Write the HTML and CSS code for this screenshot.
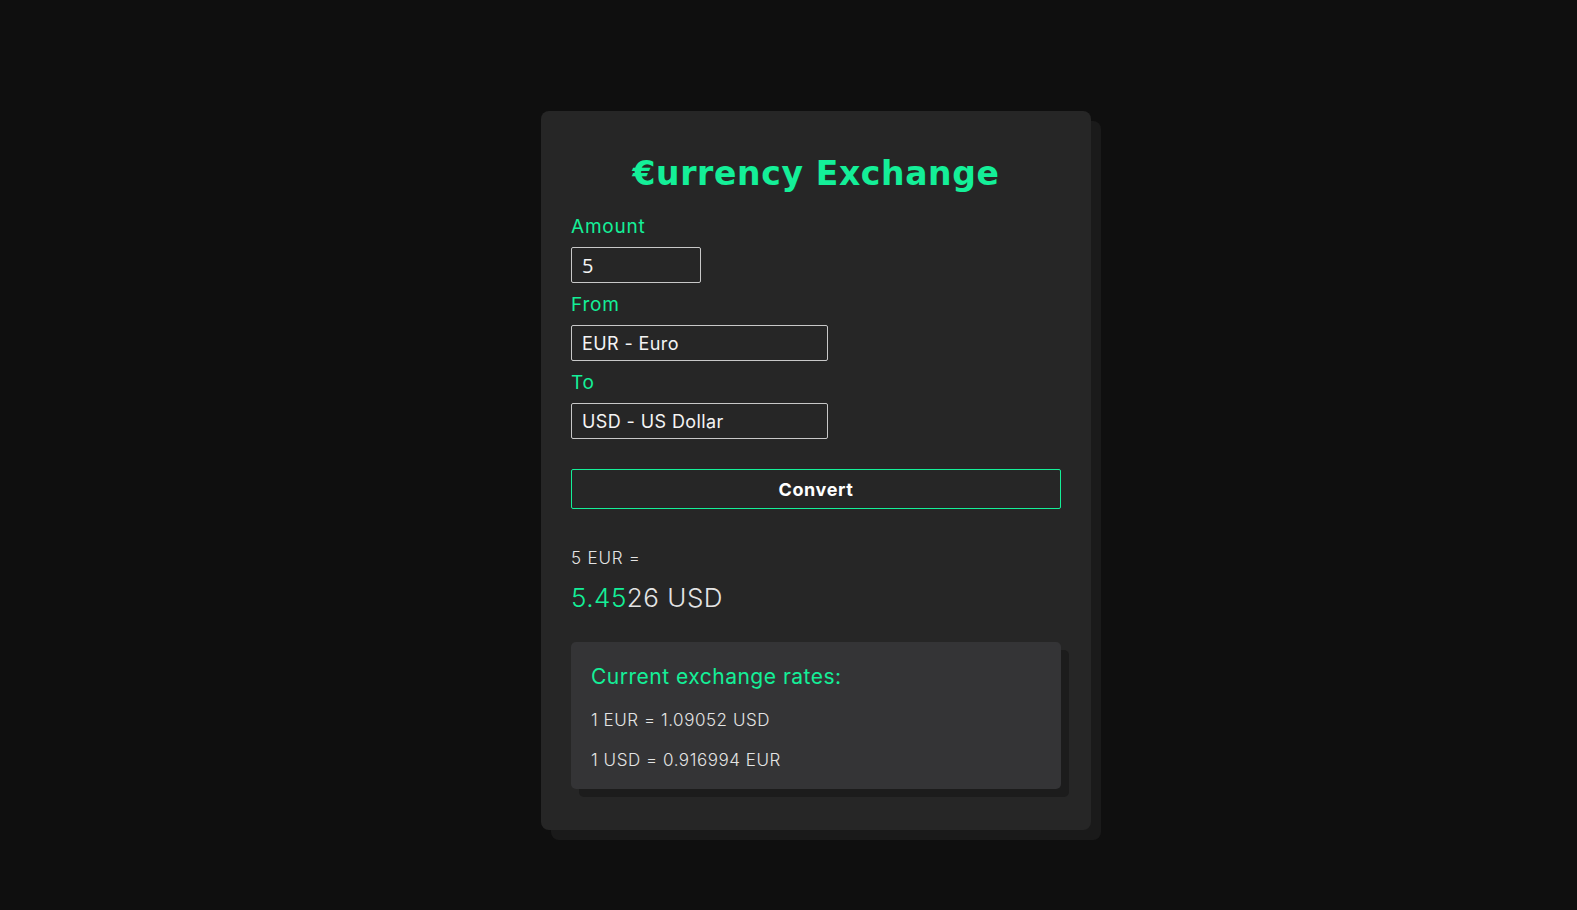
FILE: index.html
```html
<!DOCTYPE html>
<html lang="en">
<head>
<meta charset="utf-8">
<title>Currency Exchange</title>
<link rel="stylesheet" href="styles.css">
</head>
<body>
<main class="card">
  <h1 class="title">€urrency Exchange</h1>
  <form class="form">
    <label class="label" for="amount">Amount</label>
    <input class="input amount" id="amount" type="text" value="5">
    <label class="label" for="from">From</label>
    <select class="input select" id="from"><option>EUR - Euro</option></select>
    <label class="label" for="to">To</label>
    <select class="input select" id="to"><option>USD - US Dollar</option></select>
    <button class="btn" type="button">Convert</button>
  </form>
  <section class="result">
    <p class="result-from">5 EUR =</p>
    <p class="result-to"><span class="hl">5.45</span>26 USD</p>
  </section>
  <section class="rates">
    <h2 class="rates-title">Current exchange rates:</h2>
    <p class="rate">1 EUR = 1.09052 USD</p>
    <p class="rate">1 USD = 0.916994 EUR</p>
  </section>
</main>
</body>
</html>
```
FILE: styles.css
```css
* { box-sizing: border-box; }
html, body { margin: 0; padding: 0; }
body {
  background: #0f0f0f;
  font-family: Inter, "Noto Sans", sans-serif;
  color: #e4e4e4;
  display: flex;
  justify-content: center;
  padding-top: 111px;
  min-height: 910px;
}
.card {
  width: 550px;
  height: 719px;
  margin-left: 55px;
  background: #262626;
  border-radius: 8px;
  box-shadow: 10px 10px 0 #1a1a1a;
  padding: 43px 30px 30px;
}
.title {
  margin: 0 0 19px;
  text-align: center;
  font-family: "DejaVu Sans", Inter, sans-serif;
  font-size: 33px;
  line-height: 40px;
  font-weight: 700;
  color: #14ef98;
  letter-spacing: 0.65px;
}
.form { display: flex; flex-direction: column; align-items: flex-start; }
.label {
  color: #14ef98;
  font-size: 19px;
  line-height: 23px;
  font-weight: 400;
  letter-spacing: 0.8px;
  padding-top: 2px;
  margin-bottom: 9px;
}
.input {
  height: 36px;
  background: transparent;
  border: 1px solid #c8c8c8;
  border-radius: 2px;
  color: #f4f4f4;
  padding: 0 10px;
  margin-bottom: 8px;
  outline: none;
}
.amount { width: 130px; font-family: "Open Sans", sans-serif; font-size: 20px; }
.select {
  width: 257px;
  font-family: Inter, "Noto Sans", sans-serif;
  font-size: 18px;
  letter-spacing: 0.4px;
  appearance: none;
  -webkit-appearance: none;
}
.btn {
  margin-top: 22px;
  width: 490px;
  height: 40px;
  background: transparent;
  border: 1px solid #14ef98;
  border-radius: 2px;
  color: #fff;
  font-family: Inter, "Noto Sans", sans-serif;
  font-weight: 700;
  font-size: 18px;
  letter-spacing: 0.6px;
}
.result { margin-top: 38px; }
.result-from { margin: 0; font-size: 17px; line-height: 22px; font-weight: 300; letter-spacing: 0.8px; }
.result-to { margin: 13px 0 0; font-size: 26px; line-height: 32px; font-weight: 300; letter-spacing: 0.5px; }
.hl { color: #14ef98; }
.rates {
  margin-top: 28px;
  background: #343436;
  border-radius: 5px;
  box-shadow: 8px 8px 0 #1c1c1c;
  padding: 21px 20px 16px;
  height: 147px;
}
.rates-title {
  margin: 0 0 18px;
  color: #14ef98;
  font-size: 21px;
  line-height: 28px;
  font-weight: 400;
  letter-spacing: 0.5px;
}
.rate { margin: 0 0 18px; font-size: 17px; line-height: 22px; font-weight: 300; letter-spacing: 0.55px; }
.rate:last-child { margin-bottom: 0; }
```
